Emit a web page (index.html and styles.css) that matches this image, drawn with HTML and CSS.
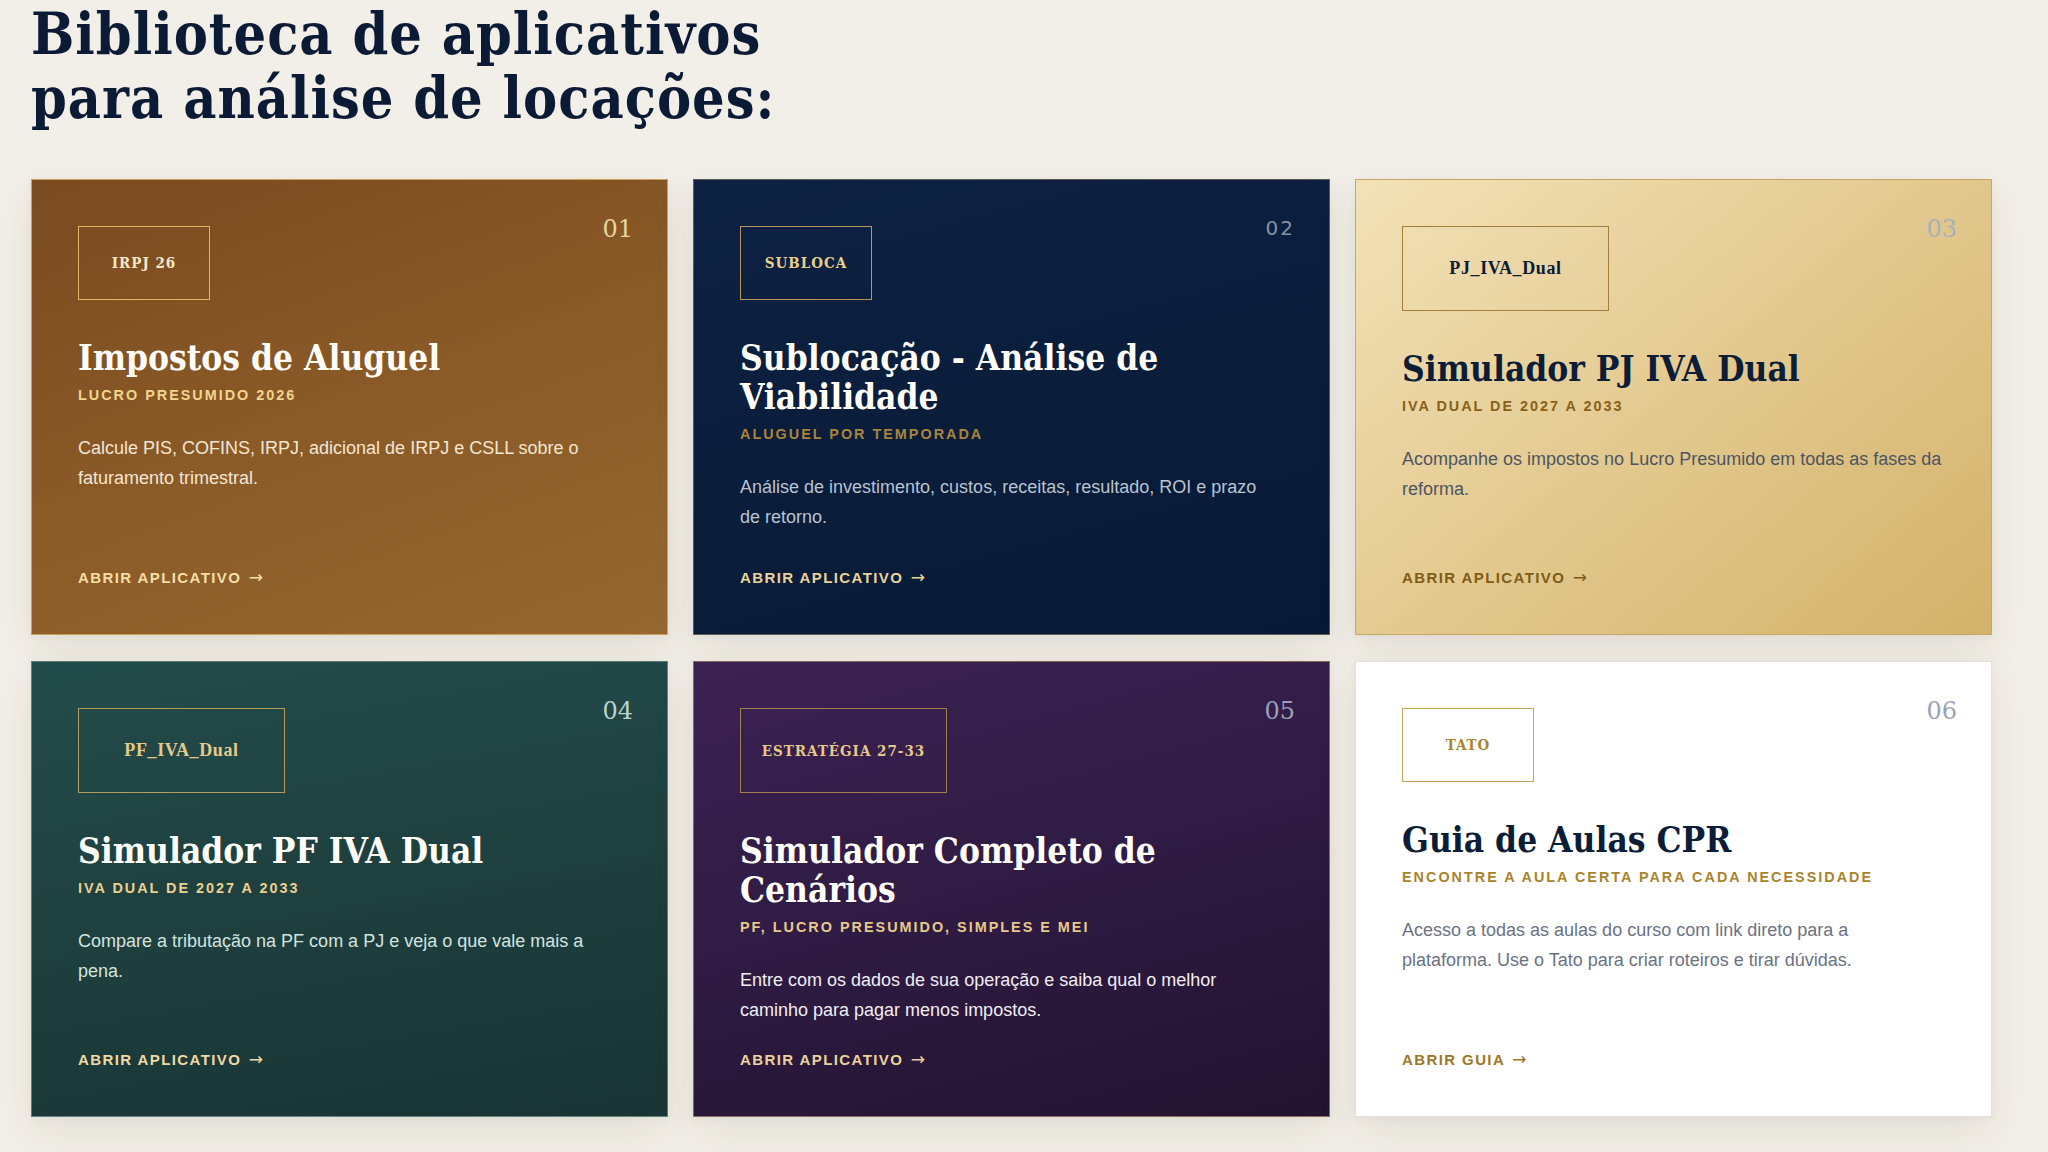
FILE: index.html
```html
<!DOCTYPE html>
<html lang="pt-BR">

<head>
  <meta charset="UTF-8" />
  <meta name="viewport" content="width=device-width, initial-scale=1.0" />
  <title>Biblioteca de aplicativos</title>
  <link rel="stylesheet" href="styles.css">
</head>

<body>
  <main class="page">
    <h1 class="page-title">Biblioteca de aplicativos<br>para análise de locações:</h1>

    <section class="apps">
      <!-- 01 -->
      <a class="app app--bronze" href="#">
        <span class="app-num">01</span>
        <div class="app-tag">IRPJ 26</div>
        <h2 class="app-title">Impostos de Aluguel</h2>
        <p class="app-kicker">Lucro Presumido 2026</p>
        <p class="app-desc">Calcule PIS, COFINS, IRPJ, adicional de IRPJ e CSLL sobre o faturamento trimestral.</p>
        <span class="app-link">Abrir aplicativo <span class="app-arrow">→</span></span>
      </a>

      <!-- 02 -->
      <a class="app app--navy" href="#">
        <span class="app-num">02</span>
        <div class="app-tag">SUBLOCA</div>
        <h2 class="app-title">Sublocação - Análise de Viabilidade</h2>
        <p class="app-kicker">Aluguel por temporada</p>
        <p class="app-desc">Análise de investimento, custos, receitas, resultado, ROI e prazo de retorno.</p>
        <span class="app-link">Abrir aplicativo <span class="app-arrow">→</span></span>
      </a>

      <!-- 03 -->
      <a class="app app--gold" href="#">
        <span class="app-num">03</span>
        <div class="app-tag app-tag--wide app-tag--code">PJ_IVA_Dual</div>
        <h2 class="app-title">Simulador PJ IVA Dual</h2>
        <p class="app-kicker">IVA Dual de 2027 a 2033</p>
        <p class="app-desc">Acompanhe os impostos no Lucro Presumido em todas as fases da reforma.</p>
        <span class="app-link">Abrir aplicativo <span class="app-arrow">→</span></span>
      </a>

      <!-- 04 -->
      <a class="app app--teal" href="#">
        <span class="app-num">04</span>
        <div class="app-tag app-tag--wide app-tag--code">PF_IVA_Dual</div>
        <h2 class="app-title">Simulador PF IVA Dual</h2>
        <p class="app-kicker">IVA Dual de 2027 a 2033</p>
        <p class="app-desc">Compare a tributação na PF com a PJ e veja o que vale mais a pena.</p>
        <span class="app-link">Abrir aplicativo <span class="app-arrow">→</span></span>
      </a>

      <!-- 05 -->
      <a class="app app--plum" href="#">
        <span class="app-num">05</span>
        <div class="app-tag app-tag--wide">ESTRATÉGIA 27-33</div>
        <h2 class="app-title">Simulador Completo de Cenários</h2>
        <p class="app-kicker">PF, Lucro Presumido, Simples e MEI</p>
        <p class="app-desc">Entre com os dados de sua operação e saiba qual o melhor caminho para pagar menos impostos.</p>
        <span class="app-link">Abrir aplicativo <span class="app-arrow">→</span></span>
      </a>

      <!-- 06 -->
      <a class="app app--paper" href="#">
        <span class="app-num">06</span>
        <div class="app-tag">TATO</div>
        <h2 class="app-title">Guia de Aulas CPR</h2>
        <p class="app-kicker">Encontre a aula certa para cada necessidade</p>
        <p class="app-desc">Acesso a todas as aulas do curso com link direto para a plataforma. Use o Tato para criar roteiros e tirar dúvidas.</p>
        <span class="app-link">Abrir guia <span class="app-arrow">→</span></span>
      </a>
    </section>
  </main>
</body>

</html>
```

FILE: styles.css
```css
* {
  margin: 0;
  padding: 0;
  box-sizing: border-box;
}

body {
  background: #f2efe8;
  font-family: 'Liberation Sans', Arial, sans-serif;
  color: #0b1b35;
}

.page {
  padding: 2px 56px 40px 31px;
}

.page-title {
  font-family: 'DejaVu Serif Condensed', 'DejaVu Serif', Georgia, serif;
  font-weight: 700;
  font-size: 57px;
  line-height: 64px;
  letter-spacing: 1px;
  color: #0b1b35;
}

/* Grid of app cards */
.apps {
  display: grid;
  grid-template-columns: repeat(3, 1fr);
  grid-auto-rows: 1fr;
  column-gap: 25px;
  row-gap: 26px;
  width: 1961px;
  margin-top: 49px;
}

.app {
  position: relative;
  display: flex;
  flex-direction: column;
  align-items: flex-start;
  padding: 46px;
  border: 1px solid rgba(201, 163, 90, 0.55);
  text-decoration: none;
  box-shadow:
    0 14px 40px rgba(70, 55, 30, 0.08),
    0 3px 8px rgba(70, 55, 30, 0.04);
}

.app-num {
  position: absolute;
  top: 37px;
  right: 34px;
  font-family: 'DejaVu Serif', Georgia, serif;
  font-size: 24px;
  line-height: 1;
}

.app-tag {
  display: flex;
  align-items: center;
  justify-content: center;
  width: 132px;
  height: 74px;
  margin-bottom: 38px;
  border: 1px solid;
  font-family: 'DejaVu Serif Condensed', 'DejaVu Serif', Georgia, serif;
  font-weight: 700;
  font-size: 15px;
  letter-spacing: 1px;
}

.app-tag--wide {
  width: 207px;
  height: 85px;
}

.app-tag--code {
  font-family: 'Liberation Serif', 'Times New Roman', serif;
  font-size: 18px;
  letter-spacing: 0.6px;
}

.app-title {
  font-family: 'DejaVu Serif Condensed', 'DejaVu Serif', Georgia, serif;
  font-weight: 700;
  font-size: 35px;
  line-height: 39px;
}

.app-kicker {
  margin-top: 8px;
  font-size: 14.4px;
  line-height: 20px;
  font-weight: 700;
  letter-spacing: 2px;
  text-transform: uppercase;
}

.app-desc {
  margin-top: 28px;
  max-width: 540px;
  font-size: 18px;
  line-height: 30px;
}

.app-link {
  display: block;
  height: 45px;
  margin-top: auto;
  padding-top: 25px;
  font-size: 15px;
  line-height: 20px;
  font-weight: 700;
  letter-spacing: 1.4px;
  text-transform: uppercase;
}

.app-arrow {
  margin-left: 2px;
  font-family: 'DejaVu Sans', sans-serif;
  font-size: 17px;
  font-weight: 400;
  line-height: 1;
  letter-spacing: 0;
}

/* Card colour themes */
.app--bronze {
  background: linear-gradient(160deg, #7a4a21 0%, #8a5a27 50%, #96682f 100%);
  border-color: #c9a15a;
}

.app--bronze .app-num { color: #ead3a0; }
.app--bronze .app-tag { border-color: #dcb565; color: #f6e8c8; }
.app--bronze .app-title { color: #fffdf8; }
.app--bronze .app-kicker { color: #f2d58f; }
.app--bronze .app-desc { color: #f3e6d3; }
.app--bronze .app-link { color: #f5dfa6; }

.app--navy {
  background: linear-gradient(165deg, #0d2143 0%, #0a1d3b 50%, #061935 100%);
  border-color: rgba(190, 170, 120, 0.45);
}

.app--navy .app-num {
  top: 38px;
  font-family: 'DejaVu Sans', sans-serif;
  font-size: 20px;
  letter-spacing: 2px;
  color: #8792a6;
}

.app--navy .app-tag { border-color: #b8955a; color: #e9cf8a; }
.app--navy .app-title { color: #fffdf8; }
.app--navy .app-kicker { color: #a8843c; }
.app--navy .app-desc { color: #b9c3d1; }
.app--navy .app-link { color: #ead39a; }

.app--gold {
  background: linear-gradient(140deg, #f2e2b8 0%, #e3c98f 50%, #d3b26a 100%);
  border-color: #c9a762;
}

.app--gold .app-num { color: #a7b0bd; }
.app--gold .app-tag { border-color: #a47f3a; color: #0c1d38; }
.app--gold .app-title { color: #0c1d38; }
.app--gold .app-kicker { color: #87611a; }
.app--gold .app-desc { color: #4d5563; }
.app--gold .app-link { color: #7f5b16; }

.app--teal {
  background: linear-gradient(170deg, #224c4b 0%, #1e403f 50%, #183434 100%);
  border-color: rgba(150, 180, 170, 0.55);
}

.app--teal .app-num { color: #bcd2ce; }
.app--teal .app-tag { border-color: #b59a5e; color: #e6c98a; }
.app--teal .app-title { color: #fffdf8; }
.app--teal .app-kicker { color: #eccf8e; }
.app--teal .app-desc { color: #d5e3df; }
.app--teal .app-link { color: #f0d9a2; }

.app--plum {
  background: linear-gradient(165deg, #3c2253 0%, #2f1b43 50%, #22132f 100%);
  border-color: rgba(190, 160, 110, 0.6);
}

.app--plum .app-num { color: #9aa0b8; }
.app--plum .app-tag { border-color: #a0804f; color: #e6c98a; }
.app--plum .app-title { color: #fffdf8; }
.app--plum .app-kicker { color: #e8c98a; }
.app--plum .app-desc { color: #f2edf4; }
.app--plum .app-link { color: #ead39a; }

.app--paper {
  background: #ffffff;
  border-color: #e4e0d6;
}

.app--paper .app-num { color: #9aa3b3; }
.app--paper .app-tag { border-color: #c9a45c; color: #a8862f; }
.app--paper .app-title { color: #0c1d38; }
.app--paper .app-kicker { color: #a8842c; }
.app--paper .app-desc { color: #6b7383; }
.app--paper .app-link { color: #9e7628; }
```
